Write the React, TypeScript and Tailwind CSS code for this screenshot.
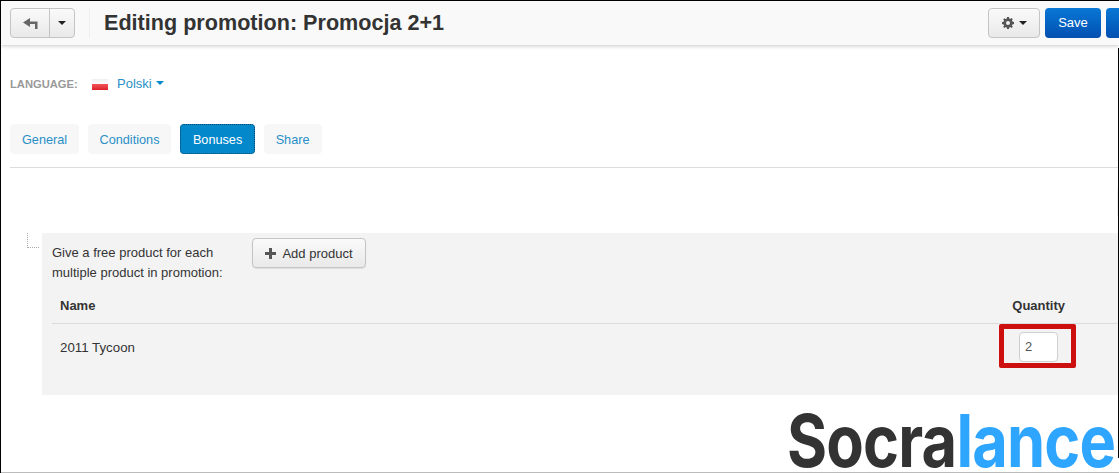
import React from 'react';

const tabs = ['General', 'Conditions', 'Bonuses', 'Share'];

const Caret = ({ className }: { className: string }) => (
  <span className={`inline-block w-0 h-0 border-x-[4px] border-x-transparent border-t-[4px] ${className}`} />
);

const Gear = () => (
  <svg width="12" height="12" viewBox="0 0 12 12" className="text-[#555]">
    <path
      fill="currentColor"
      fillRule="evenodd"
      d="M5 0h2l.3 1.6 1 .4 1.3-.9 1.2 1.2-.9 1.3.5 1 1.6.3v2.2l-1.6.3-.5 1 .9 1.3-1.2 1.2-1.3-.9-1 .4L7 12H5l-.3-1.6-1-.4-1.3.9-1.2-1.2.9-1.3-.5-1L0 7V5l1.6-.3.5-1-.9-1.3 1.2-1.2 1.3.9 1-.4L5 0zm1 4a2 2 0 1 0 0 4 2 2 0 0 0 0-4z"
    />
  </svg>
);

export default function App() {
  return (
    <div className="relative w-[1119px] h-[473px] overflow-hidden bg-white border-l border-t border-black font-['Liberation_Sans',Arial,sans-serif] text-[13px] text-[#333]">
      {/* Top bar */}
      <div className="h-[44px] bg-[#f9f9f9] shadow-[0_1px_4px_rgba(0,0,0,0.22)] flex items-center pl-[9px] relative z-10">
        <div className="flex h-[30px] w-[65px] rounded-[4px] border border-[#c4c4c4] bg-gradient-to-b from-[#fafafa] to-[#e9e9e9]">
          <div className="w-[39px] flex items-center justify-center border-r border-[#c4c4c4]">
            <svg width="15" height="11" viewBox="0 0 15 11" className="text-[#666]">
              <path fill="currentColor" d="M7 0 0 4.5 7 9V6h5v5h2.5V3.5H7V0z" />
            </svg>
          </div>
          <div className="flex-1 flex items-center justify-center">
            <Caret className="border-t-[#222]" />
          </div>
        </div>
        <div className="w-px h-[30px] bg-[#efefef] ml-[14px]" />
        <h1 className="ml-[14px] text-[21.6px] font-bold text-[#333] leading-none pb-[1px]">Editing promotion: Promocja 2+1</h1>
        <div className="ml-auto flex items-center gap-[5px] -mr-[57px]">
          <div className="w-[52px] h-[30px] rounded-[4px] border border-[#c4c4c4] bg-gradient-to-b from-[#fafafa] to-[#e9e9e9] flex items-center justify-center gap-[5px]">
            <Gear />
            <Caret className="border-t-[#222]" />
          </div>
          <div className="w-[56px] h-[30px] rounded-[4px] bg-gradient-to-b from-[#0a77d6] to-[#0350b0] text-white flex items-center justify-center">Save</div>
          <div className="w-[70px] h-[30px] rounded-[4px] bg-gradient-to-b from-[#0a77d6] to-[#0350b0]" />
        </div>
      </div>

      {/* Language */}
      <div className="flex items-center h-[20px] mt-[29px] pl-[9px]">
        <span className="text-[11.2px] font-bold text-[#999] w-[82px]">LANGUAGE:</span>
        <span className="w-[16px] h-[11px] mr-[9px] flex flex-col">
          <span className="h-1/2 bg-gradient-to-b from-[#f0f0f0] to-[#fafafa]" />
          <span className="h-1/2 bg-gradient-to-b from-[#f2525a] to-[#dc1c26]" />
        </span>
        <span className="text-[#2a8fc7]">Polski</span>
        <Caret className="border-t-[#0388cc] ml-[4px] mb-[3px]" />
      </div>

      {/* Tabs */}
      <div className="flex gap-[8.4px] mt-[30px] ml-[9px] pb-[13px] border-b border-[#dcdcdc] text-[12.7px]">
        {tabs.map(t => (
          <div
            key={t}
            className={
              t === 'Bonuses'
                ? 'h-[30px] px-[12px] pt-[3px] flex items-center rounded-[4px] bg-[#0388cc] text-white border border-dotted border-[#02466a]'
                : 'h-[30px] px-[12px] pt-[3px] flex items-center rounded-[4px] bg-[#f7f7f7] text-[#2a8fc7]'
            }
          >
            {t}
          </div>
        ))}
      </div>

      {/* Bonus panel */}
      <div className="relative ml-[41px] mt-[65px] h-[162px] bg-[#f3f3f3] px-[10px]">
        <div className="absolute left-[-15px] top-0 w-[12px] h-[15px] border-l border-b border-dotted border-[#aaa]" />
        <div className="flex pt-[5px] h-[63px]">
          <div className="w-[200px] leading-[20px] pt-[5px]">
            Give a free product for each
            <br />
            multiple product in promotion:
          </div>
          <div className="w-[114px] h-[30px] pt-[1px] rounded-[4px] border border-[#c4c4c4] bg-gradient-to-b from-[#fafafa] to-[#e9e9e9] shadow-[0_1px_1px_rgba(0,0,0,0.08)] flex items-center justify-center gap-[6px]">
            <svg width="11" height="11" viewBox="0 0 11 11" className="text-[#555]">
              <path fill="currentColor" d="M4 0h3v4h4v3H7v4H4V7H0V4h4z" />
            </svg>
            Add product
          </div>
        </div>
        <div className="flex justify-between h-[28px] pl-[8px] pr-[54px] font-bold border-b border-[#dcdcdc] -mr-[10px]">
          <span>Name</span>
          <span>Quantity</span>
        </div>
        <div className="flex justify-between items-center h-[46px] pl-[8px] pr-[61px] -mr-[10px]">
          <span className="text-[13.3px] pt-[1px]">2011 Tycoon</span>
          <div className="w-[39px] h-[30px] rounded-[4px] bg-white border border-[#cfcfcf] flex items-center pl-[5px] text-[#555]">2</div>
        </div>
        {/* red highlight */}
        <div className="absolute left-[957px] top-[91px] w-[77px] h-[44px] border-[5px] border-[#cc1010] rounded-[2px]" />
      </div>

      {/* Scroll handle peeking from the right edge */}
      <div className="absolute right-0 top-[187px] w-[2px] h-[28px] bg-[#eeeeee] rounded-l-[3px]" />
      {/* Right frame line */}
      <div className="absolute right-0 top-[47px] w-px h-[410px] bg-black" />

      {/* Logo */}
      <div className="absolute left-[786px] top-[406px] text-[73px] leading-[68px] font-bold font-['Inter',sans-serif] tracking-[-1px] whitespace-nowrap origin-left scale-x-[0.84]">
        <span className="text-[#333333]">Socra</span>
        <span className="text-[#2ea6ff]">lance</span>
      </div>
      <div className="absolute left-0 right-0 bottom-0 h-px bg-[#bbb]" />
    </div>
  );
}
